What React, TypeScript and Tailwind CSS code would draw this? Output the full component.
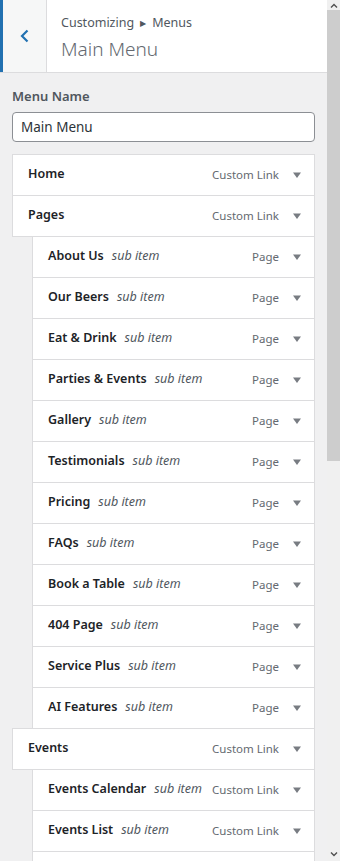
import React from "react";

type Item = { title: string; type: string; sub?: boolean };

const items: Item[] = [
  { title: "Home", type: "Custom Link" },
  { title: "Pages", type: "Custom Link" },
  { title: "About Us", type: "Page", sub: true },
  { title: "Our Beers", type: "Page", sub: true },
  { title: "Eat & Drink", type: "Page", sub: true },
  { title: "Parties & Events", type: "Page", sub: true },
  { title: "Gallery", type: "Page", sub: true },
  { title: "Testimonials", type: "Page", sub: true },
  { title: "Pricing", type: "Page", sub: true },
  { title: "FAQs", type: "Page", sub: true },
  { title: "Book a Table", type: "Page", sub: true },
  { title: "404 Page", type: "Page", sub: true },
  { title: "Service Plus", type: "Page", sub: true },
  { title: "AI Features", type: "Page", sub: true },
  { title: "Events", type: "Custom Link" },
  { title: "Events Calendar", type: "Custom Link", sub: true },
  { title: "Events List", type: "Custom Link", sub: true },
];

function MenuRow({ item }: { item: Item }) {
  return (
    <li className={item.sub ? "pl-5" : ""}>
      <div className="-mt-px flex h-[42px] items-center border border-[#dcdcde] bg-white pl-[15px] pr-[12px]">
        <span className="text-[12.5px] font-semibold text-[#1d2327]">{item.title}</span>
        {item.sub && (
          <span className="ml-[8px] text-[12.5px] italic text-[#50575e]">sub item</span>
        )}
        <span className="ml-auto text-[11.5px] text-[#646970]">{item.type}</span>
        <svg viewBox="0 0 10 10" className="ml-[13px] h-[10px] w-[10px] fill-[#787c82]">
          <path d="M1 2.5h8L5 8z" />
        </svg>
      </div>
    </li>
  );
}

// stand-in for the browser's scrollbar seen in the screenshot
function Scrollbar() {
  return (
    <div className="flex w-[13px] shrink-0 flex-col bg-[#f0f0f0]">
      <div className="flex h-[10px] items-center justify-center">
        <svg viewBox="0 0 8 5" className="h-[5px] w-[8px]" fill="none" stroke="#505050" strokeWidth="1.4">
          <path d="M1 4.5 4 1.5l3 3" />
        </svg>
      </div>
      <div className="h-[451px] bg-[#cdcdcd]" />
      <div className="flex-1" />
      <div className="flex h-[14px] items-center justify-center">
        <svg viewBox="0 0 8 5" className="h-[5px] w-[8px]" fill="none" stroke="#505050" strokeWidth="1.4">
          <path d="M1 .5 4 3.5l3-3" />
        </svg>
      </div>
    </div>
  );
}

export default function App() {
  return (
    <div className="flex h-[861px] overflow-hidden bg-[#f0f0f1] font-['Noto_Sans',sans-serif]">
      <div className="min-w-0 flex-1">
        {/* header */}
        <div className="flex h-[73px] border-b border-[#dcdcde] bg-white">
          <button className="flex w-[47px] items-center justify-center border-l-[3px] border-r border-l-[#2271b1] border-r-[#dcdcde] bg-[#f6f7f7] text-[#2271b1]">
            <svg viewBox="0 0 20 20" className="h-5 w-5" fill="none" stroke="currentColor" strokeWidth="2.2">
              <path d="M12.5 4.5 7 10l5.5 5.5" />
            </svg>
          </button>
          <div className="pl-[14px] pt-[14px]">
            <div className="flex items-center text-[12.5px] text-[#50575e]">
              Customizing
              <span className="mx-[6px] text-[8px]">▶</span>
              Menus
            </div>
            <div className="mt-[2px] text-[19px] font-light leading-7 text-[#646970]">Main Menu</div>
          </div>
        </div>

        <div className="px-3 pt-[14px]">
          <label className="block text-[13px] font-semibold text-[#50575e]">Menu Name</label>
          <input
            readOnly
            value="Main Menu"
            className="mt-[5px] h-[30px] w-full rounded-[4px] border border-[#8c8f94] bg-white px-2 text-[13.5px] text-[#2c3338] outline-none"
          />
          <ul className="mt-[13px]">
            {items.map((it) => (
              <MenuRow key={it.title} item={it} />
            ))}
            {/* top of the next row, scrolled out of view */}
            <li className="pl-5" aria-hidden>
              <div className="-mt-px h-[42px] border border-[#dcdcde] bg-white" />
            </li>
          </ul>
        </div>
      </div>
      <Scrollbar />
    </div>
  );
}
